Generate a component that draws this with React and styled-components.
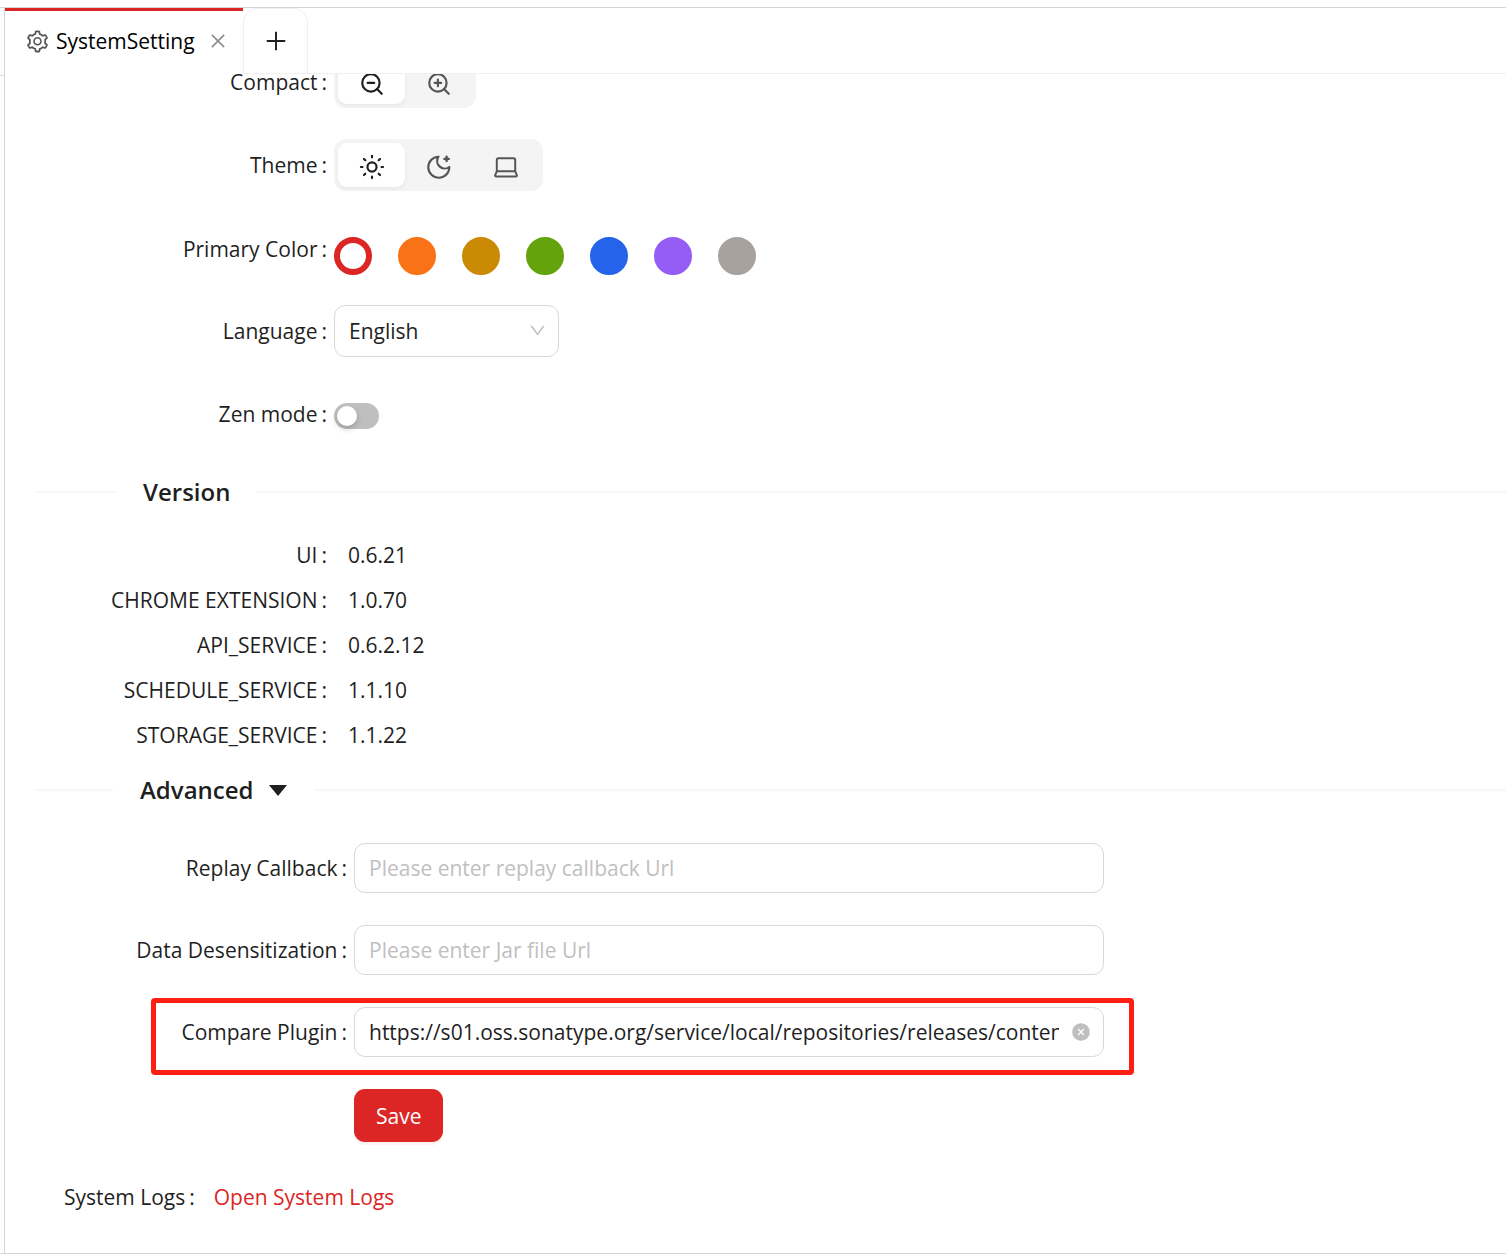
import React, { useState } from "react";
import styled, { createGlobalStyle, css } from "styled-components";
import {
  AiOutlineSetting,
  AiOutlineClose,
  AiOutlinePlus,
  AiOutlineDown,
  AiFillCloseCircle,
} from "react-icons/ai";
import { FiZoomIn, FiZoomOut } from "react-icons/fi";

const Global = createGlobalStyle`
  * { box-sizing: border-box; }
  body {
    margin: 0;
    background: #fff;
    color: #1f1f1f;
    font: 21px/32px "Open Sans", "Noto Sans", sans-serif;
  }
  button, input, select { font: inherit; color: inherit; }
`;

const hiddenInput = css`
  appearance: none;
  position: absolute;
  inset: 0;
  margin: 0;
  opacity: 0;
  cursor: pointer;
`;

const Page = styled.div`
  display: flex;
  min-height: 100vh;
  padding: 7px 0 3px;
`;

const Rail = styled.div`
  width: 4px;
  border-top: 1px solid #d9d9d9;
  border-bottom: 1px solid #d9d9d9;
`;

const RailHead = styled.div`
  height: 68px;
  border-bottom: 1px solid #d9d9d9;
`;

const Panel = styled.div`
  flex: 1;
  min-width: 0;
  border: solid #d4d4d4;
  border-width: 1px 0 1px 1px;
`;

const TabBar = styled.div`
  display: flex;
  height: 66px;
`;

const Tab = styled.div`
  display: flex;
  align-items: center;
  width: 238px;
  padding: 0 15px 3px 20px;
  border-top: 3px solid #dc2626;
  color: #000;
`;

const TabLabel = styled.button`
  display: flex;
  align-items: center;
  gap: 6px;
  flex: 1;
  padding: 0;
  border: 0;
  background: none;
  white-space: nowrap;

  svg { color: #555; }
`;

const IconButton = styled.button`
  display: flex;
  padding: 0;
  border: 0;
  background: none;
  color: ${(p) => p.$color};
  cursor: pointer;
`;

const AddTab = styled.button`
  display: flex;
  align-items: center;
  justify-content: center;
  width: 65px;
  padding: 0;
  border: 1px solid #f0f0f0;
  border-radius: 14px 14px 0 0;
  background: #fff;
`;

const TabRest = styled.div`
  flex: 1;
  border-bottom: 1px solid #f0f0f0;
`;

const Body = styled.main`
  overflow: hidden;
  padding: 0 0 39px 30px;
`;

const Settings = styled.form`
  display: flex;
  flex-direction: column;
  gap: 31px;
  margin-top: -18px;
`;

const Row = styled.div`
  display: grid;
  grid-template-columns: 299px minmax(0, 1fr);
  align-items: center;
  height: 52px;
`;

const Label = styled.label`
  padding-right: 7px;
  line-height: 24px;
  text-align: right;
  white-space: nowrap;

  &::after {
    content: ":";
    margin-left: 4px;
  }
`;

const Segmented = styled.div`
  display: flex;
  justify-self: start;
  height: 52px;
  padding: 4px;
  border-radius: 12px;
  background: #f4f4f4;
`;

const Segment = styled.label`
  position: relative;
  display: flex;
  align-items: center;
  justify-content: center;
  width: 67px;
  padding-top: 3px;
  border-radius: 9px;
  color: ${(p) => (p.$active ? "#1f1f1f" : "#555")};
  background: ${(p) => (p.$active ? "#fff" : "none")};
  box-shadow: ${(p) => (p.$active ? "0 2px 4px rgba(0, 0, 0, 0.05)" : "none")};

  input { ${hiddenInput} }
`;

const Swatches = styled.div`
  display: flex;
  gap: 26px;
  padding-top: 15px;
`;

const Swatch = styled.input`
  appearance: none;
  width: 38px;
  height: 38px;
  margin: 0;
  border: ${(p) => (p.checked ? "6px" : "19px")} solid ${(p) => p.$color};
  border-radius: 50%;
  cursor: pointer;
`;

const SelectBox = styled.div`
  position: relative;
  width: 225px;

  svg {
    position: absolute;
    right: 12px;
    top: 16px;
    color: #bfbfbf;
    pointer-events: none;
  }
`;

const Select = styled.select`
  appearance: none;
  width: 100%;
  height: 52px;
  padding: 0 40px 0 14px;
  border: 1px solid #d9d9d9;
  border-radius: 11px;
  background: #fff;
`;

const Switch = styled.input`
  appearance: none;
  display: flex;
  align-items: center;
  justify-content: ${(p) => (p.checked ? "flex-end" : "flex-start")};
  width: 45px;
  height: 26px;
  margin: 4px 0 0;
  padding: 3px;
  border-radius: 13px;
  background: ${(p) => (p.checked ? "#dc2626" : "#bfbfbf")};
  cursor: pointer;

  &::before {
    content: "";
    width: 20px;
    height: 20px;
    border-radius: 50%;
    background: #fff;
    box-shadow: 0 3px 6px rgba(0, 35, 11, 0.2);
  }
`;

const Divider = styled.div`
  display: flex;
  align-items: center;
  gap: 27px;
  height: 38px;
  margin-top: ${(p) => p.$space};

  &::before, &::after {
    content: "";
    height: 2px;
    background: #f7f7f7;
  }
  &::before { width: ${(p) => p.$lead}; }
  &::after { flex: 1; }
`;

const Heading = styled.h2`
  margin: 0;
  font-size: 24px;
  font-weight: 600;
`;

const HeadingToggle = styled.button`
  display: flex;
  align-items: center;
  gap: 16px;
  padding: 0;
  border: 0;
  background: none;
  cursor: pointer;
`;

const Versions = styled.div`
  margin-top: 21px;
`;

const VersionRow = styled(Row)`
  height: 45px;
`;

const Value = styled.span`
  padding-left: 14px;
`;

const Fields = styled.form`
  display: flex;
  flex-direction: column;
  gap: 32px;
  margin-top: 34px;
`;

const Field = styled.div`
  position: relative;
  display: grid;
  grid-template-columns: 319px minmax(0, 750px);
  align-items: center;
  justify-content: start;
  width: fit-content;
  min-height: 50px;
  max-width: 100%;
`;

const FieldBox = styled.div`
  display: flex;
  align-items: center;
  gap: 12px;
  width: 750px;
  max-width: 100%;
  height: 50px;
  padding: 0 12px 0 14px;
  border: 1px solid #d9d9d9;
  border-radius: 11px;
`;

const TextInput = styled.input`
  flex: 1;
  min-width: 0;
  padding: 0;
  border: 0;
  outline: 0;
  background: none;

  &::placeholder { color: #bfbfbf; opacity: 1; }
`;

const Highlight = styled.div`
  position: absolute;
  inset: -9px -30px -18px 116px;
  border: 5px solid #ff1e12;
  border-radius: 4px;
  pointer-events: none;
`;

const SaveButton = styled.button`
  grid-column: 2;
  justify-self: start;
  height: 53px;
  padding: 0 22px;
  border: 0;
  border-radius: 11px;
  background: #dc2626;
  color: #fff;
  box-shadow: 0 3px 0 rgba(255, 38, 5, 0.06);
  cursor: pointer;
`;

const Logs = styled.div`
  display: flex;
  align-items: center;
  gap: 12px;
  margin-top: 39px;
  padding-left: 29px;
`;

const LogsLink = styled.a`
  color: #dc2626;
  text-decoration: none;
`;

const stroke = {
  width: 26,
  height: 26,
  viewBox: "0 0 24 24",
  fill: "none",
  stroke: "currentColor",
  strokeWidth: 2,
  strokeLinecap: "round",
  strokeLinejoin: "round",
  "aria-hidden": true,
};

const SunIcon = () => (
  <svg {...stroke}>
    <circle cx="12" cy="12" r="4.2" />
    <path d="M12 1.800v1.400M12 20.800v1.400M1.800 12h1.400M20.800 12h1.400M4.600 4.600l1.200 1.200M18.200 18.200l1.200 1.200M4.600 19.400l1.200-1.200M18.200 5.800l1.200-1.200" />
  </svg>
);

const MoonIcon = () => (
  <svg {...stroke}>
    <path d="M11.500 2.500a7 7 0 0 0 10 9.500A9.700 9.700 0 1 1 11.500 2.500Z" />
    <path d="M19 2.500v4M17 4.500h4" strokeWidth="2.200" />
  </svg>
);

const LaptopIcon = () => (
  <svg {...stroke} strokeWidth="1.8">
    <path d="M3.500 16V5.500A1.500 1.500 0 0 1 5 4h14a1.500 1.500 0 0 1 1.500 1.500V16" />
    <path d="M3.500 16h17l1.500 3.500a1 1 0 0 1-1 1.300H3a1 1 0 0 1-1-1.300z" />
  </svg>
);

const CaretIcon = () => (
  <svg width="18" height="11" viewBox="0 0 18 11" aria-hidden="true">
    <path d="M0 0h18L9 11z" fill="currentColor" />
  </svg>
);

const themes = [
  ["Light", SunIcon],
  ["Dark", MoonIcon],
  ["System", LaptopIcon],
];

const sizes = [
  ["Small", FiZoomOut],
  ["Large", FiZoomIn],
];

const colors = [
  ["Red", "#dc2626"],
  ["Orange", "#f97316"],
  ["Yellow", "#ca8a04"],
  ["Green", "#65a30d"],
  ["Blue", "#2563eb"],
  ["Purple", "#955cf6"],
  ["Stone", "#a8a29e"],
];

const versions = [
  ["UI", "0.6.21"],
  ["CHROME EXTENSION", "1.0.70"],
  ["API_SERVICE", "0.6.2.12"],
  ["SCHEDULE_SERVICE", "1.1.10"],
  ["STORAGE_SERVICE", "1.1.22"],
];

function SegmentedControl({ name, options }) {
  const [value, setValue] = useState(options[0][0]);
  return (
    <Segmented role="radiogroup" aria-labelledby={`${name}-label`}>
      {options.map(([label, Icon]) => (
        <Segment key={label} $active={value === label}>
          <input
            type="radio"
            name={name}
            aria-label={label}
            checked={value === label}
            onChange={() => setValue(label)}
          />
          <Icon size={26} />
        </Segment>
      ))}
    </Segmented>
  );
}

export default function App() {
  const [color, setColor] = useState("Red");
  const [zen, setZen] = useState(false);
  const [open, setOpen] = useState(true);
  const [plugin, setPlugin] = useState(
    "https://s01.oss.sonatype.org/service/local/repositories/releases/content"
  );

  return (
    <Page>
      <Global />
      <Rail>
        <RailHead />
      </Rail>
      <Panel>
        <TabBar>
          <Tab>
            <TabLabel type="button">
              <AiOutlineSetting size={25} />
              SystemSetting
            </TabLabel>
            <IconButton type="button" aria-label="Close tab" $color="#8c8c8c">
              <AiOutlineClose size={20} />
            </IconButton>
          </Tab>
          <AddTab type="button" aria-label="Add tab">
            <AiOutlinePlus size={26} />
          </AddTab>
          <TabRest />
        </TabBar>

        <Body>
          <Settings>
            <Row>
              <Label as="span" id="compact-label">Compact</Label>
              <SegmentedControl name="compact" options={sizes} />
            </Row>
            <Row>
              <Label as="span" id="theme-label">Theme</Label>
              <SegmentedControl name="theme" options={themes} />
            </Row>
            <Row>
              <Label as="span" id="color-label">Primary Color</Label>
              <Swatches role="radiogroup" aria-labelledby="color-label">
                {colors.map(([name, value]) => (
                  <Swatch
                    key={name}
                    type="radio"
                    name="color"
                    aria-label={name}
                    $color={value}
                    checked={color === name}
                    onChange={() => setColor(name)}
                  />
                ))}
              </Swatches>
            </Row>
            <Row>
              <Label htmlFor="language">Language</Label>
              <SelectBox>
                <Select id="language" defaultValue="English">
                  <option>English</option>
                </Select>
                <AiOutlineDown size={19} />
              </SelectBox>
            </Row>
            <Row>
              <Label htmlFor="zen">Zen mode</Label>
              <Switch
                id="zen"
                type="checkbox"
                role="switch"
                checked={zen}
                onChange={() => setZen(!zen)}
              />
            </Row>
          </Settings>

          <Divider $lead="81px" $space="33px">
            <Heading>Version</Heading>
          </Divider>
          <Versions>
            {versions.map(([name, value]) => (
              <VersionRow key={name}>
                <Label as="span">{name}</Label>
                <Value>{value}</Value>
              </VersionRow>
            ))}
          </Versions>

          <Divider $lead="78px" $space="14px">
            <Heading>
              <HeadingToggle type="button" aria-expanded={open} onClick={() => setOpen(!open)}>
                Advanced
                <CaretIcon />
              </HeadingToggle>
            </Heading>
          </Divider>
          {open && (
            <Fields onSubmit={(e) => e.preventDefault()}>
              <Field>
                <Label htmlFor="callback">Replay Callback</Label>
                <FieldBox>
                  <TextInput id="callback" placeholder="Please enter replay callback Url" />
                </FieldBox>
              </Field>
              <Field>
                <Label htmlFor="jar">Data Desensitization</Label>
                <FieldBox>
                  <TextInput id="jar" placeholder="Please enter Jar file Url" />
                </FieldBox>
              </Field>
              <Field>
                <Label htmlFor="plugin">Compare Plugin</Label>
                <FieldBox>
                  <TextInput
                    id="plugin"
                    value={plugin}
                    onChange={(e) => setPlugin(e.target.value)}
                  />
                  <IconButton
                    type="button"
                    aria-label="Clear"
                    $color="#bfbfbf"
                    onClick={() => setPlugin("")}
                  >
                    <AiFillCloseCircle size={20} />
                  </IconButton>
                </FieldBox>
                <Highlight />
              </Field>
              <Field>
                <SaveButton type="submit">Save</SaveButton>
              </Field>
            </Fields>
          )}

          <Logs>
            <Label as="span">System Logs</Label>
            <LogsLink href="#logs">Open System Logs</LogsLink>
          </Logs>
        </Body>
      </Panel>
    </Page>
  );
}
